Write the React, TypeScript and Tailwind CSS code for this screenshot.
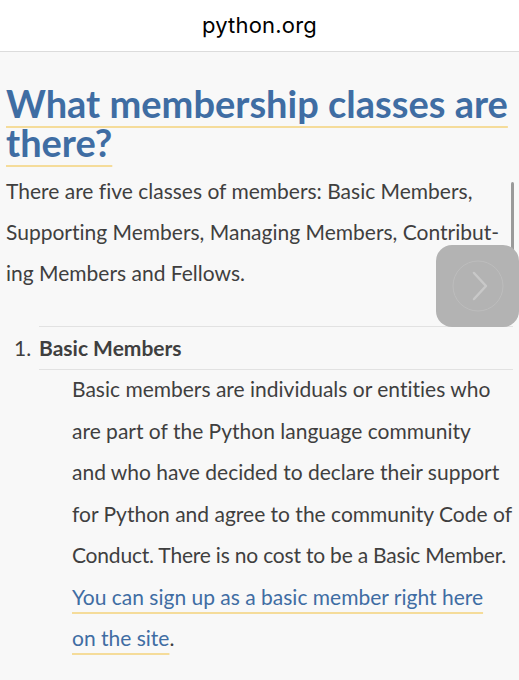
import React from 'react';

export default function App() {
  const font = { fontFamily: 'Lato, "Noto Sans", sans-serif' };
  return (
    <div className="w-[519px] h-[680px] overflow-hidden bg-[#f8f8f8] relative [font-variant-ligatures:none]" style={font}>
      <header className="h-[52px] bg-white border-b border-[#dcdcdc] flex items-center justify-center">
        <span className="text-[22px] text-black tracking-[0.2px]" style={{ fontFamily: 'Inter, "Liberation Sans", sans-serif' }}>python.org</span>
      </header>
      <main className="px-[6px] pt-[32px]">
        <h1 className="text-[38px] leading-[39px] font-bold text-[#3f6da3]">
          <span className="underline decoration-[#f5dc9a] decoration-2 underline-offset-[8px]">What membership classes are there?</span>
        </h1>
        <p className="mt-[8px] text-[21px] leading-[41px] text-[#3f3f3f] whitespace-nowrap">
          There are five classes of members: Basic Members,<br />
          Supporting Members, Managing Members, Contribut-<br />
          ing Members and Fellows.
        </p>
        <ol className="mt-[33px] pl-[33px]">
          <li className="relative">
            <div className="border-t border-b border-[#e2e2e2] py-[10px] flex">
              <span className="absolute -left-[25px] top-[11px] text-[21px] leading-[22px] text-[#3f3f3f]">1.</span>
              <span className="text-[21px] leading-[22px] font-bold text-[#3f3f3f]">Basic Members</span>
            </div>
            <p className="pl-[33px] text-[21px] leading-[41.5px] text-[#3f3f3f] -mt-[2px] whitespace-nowrap">
              Basic members are individuals or entities who<br />
              are part of the Python language community<br />
              and who have decided to declare their support<br />
              for Python and agree to the community Code of<br />
              <span className="tracking-[-0.2px]">Conduct. There is no cost to be a Basic Member.</span><br />
              <span className="text-[#3f6da3] underline decoration-[#f5dc9a] decoration-2 underline-offset-[7px]">You can sign up as a basic member right here<br />on the site</span>.
            </p>
          </li>
        </ol>
      </main>
      <div className="absolute left-[511px] top-[182px] w-[3px] h-[80px] rounded-full bg-[#9a9a9a]" />
      <div className="absolute left-[436px] top-[245px] w-[83px] h-[82px] rounded-[16px] bg-[#b3b3b3] flex items-center justify-center">
        <svg width="54" height="54" viewBox="0 0 54 54" fill="none">
          <circle cx="27" cy="27" r="25" stroke="#bdbdbd" strokeWidth="1" />
          <path d="M23 14 L35 27 L23 40" stroke="#c8c8c8" strokeWidth="2.5" strokeLinecap="round" strokeLinejoin="round" />
        </svg>
      </div>
    </div>
  );
}
